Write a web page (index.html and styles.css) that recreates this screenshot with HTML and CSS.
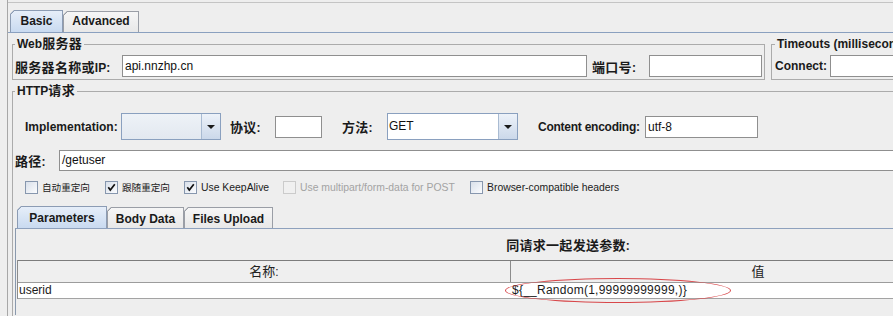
FILE: index.html
```html
<!DOCTYPE html>
<html lang="zh-CN">
<head>
<meta charset="utf-8">
<title>HTTP请求</title>
<link rel="stylesheet" href="styles.css">
</head>
<body>
<div class="wrap">
  <div class="topstrip"></div>
  <div class="tabs top-tabs">
    <div class="tab tab-sel tab-basic">Basic</div>
    <div class="tab tab-adv">Advanced</div>
  </div>
  <div class="tabpanel">
    <div class="server-row">
      <fieldset class="group group-web">
        <legend>Web<span class="zh">服务器</span></legend>
        <div class="row row-web">
          <span class="lbl lbl-ip"><span class="zh">服务器名称或</span>IP:</span>
          <div class="input in-ip">api.nnzhp.cn</div>
          <span class="lbl lbl-port"><span class="zh">端口号</span>:</span>
          <div class="input in-port"></div>
        </div>
      </fieldset>
      <fieldset class="group group-timeout">
        <legend>Timeouts (milliseconds)</legend>
        <div class="row row-timeout">
          <span class="lbl lbl-connect">Connect:</span>
          <div class="input in-connect"></div>
          <span class="lbl lbl-response">Response:</span>
          <div class="input in-response"></div>
        </div>
      </fieldset>
    </div>
    <fieldset class="group group-http">
      <legend>HTTP<span class="zh">请求</span></legend>
      <div class="row row-impl">
        <span class="lbl lbl-impl">Implementation:</span>
        <div class="combo combo-impl"><div class="combo-field"></div><div class="combo-btn"><span class="tri"></span></div></div>
        <span class="lbl lbl-proto"><span class="zh">协议</span>:</span>
        <div class="input in-proto"></div>
        <span class="lbl lbl-method"><span class="zh">方法</span>:</span>
        <div class="combo combo-method"><div class="combo-field">GET</div><div class="combo-btn"><span class="tri"></span></div></div>
        <span class="lbl lbl-enc">Content encoding:</span>
        <div class="input in-enc">utf-8</div>
      </div>
      <div class="row row-path">
        <span class="lbl lbl-path"><span class="zh">路径</span>:</span>
        <div class="input in-path">/getuser</div>
      </div>
      <div class="row row-checks">
        <div class="check check-1"><span class="cb"></span><span class="cb-text zh-s">自动重定向</span></div>
        <div class="check check-2"><span class="cb"><svg class="tick" width="11" height="11" viewBox="0 0 11 11"><path d="M2.3 5.2 L4.3 8 L8.8 2.3" fill="none" stroke="#111" stroke-width="1.7"/></svg></span><span class="cb-text zh-s">跟随重定向</span></div>
        <div class="check check-3"><span class="cb"><svg class="tick" width="11" height="11" viewBox="0 0 11 11"><path d="M2.3 5.2 L4.3 8 L8.8 2.3" fill="none" stroke="#111" stroke-width="1.7"/></svg></span><span class="cb-text">Use KeepAlive</span></div>
        <div class="check check-4 disabled"><span class="cb"></span><span class="cb-text">Use multipart/form-data for POST</span></div>
        <div class="check check-5"><span class="cb"></span><span class="cb-text">Browser-compatible headers</span></div>
      </div>
      <div class="params">
        <div class="tabs param-tabs">
          <div class="tab tab-sel tab-params">Parameters</div>
          <div class="tab tab-body">Body Data</div>
          <div class="tab tab-files">Files Upload</div>
        </div>
        <div class="param-panel">
          <div class="param-heading"><span class="zh">同请求一起发送参数</span>:</div>
          <div class="ptable">
            <div class="prow phead">
              <div class="pcell pname"><span class="zh-n">名称</span>:</div>
              <div class="pcell pvalue"><span class="zh-n">值</span></div>
            </div>
            <div class="prow pdata">
              <div class="pcell pname">userid</div>
              <div class="pcell pvalue"><span class="fn-text">${__Random(1,99999999999,)}</span><span class="annot"></span></div>
            </div>
          </div>
        </div>
      </div>
    </fieldset>
  </div>
</div>
</body>
</html>
```

FILE: styles.css
```css
html, body {
  margin: 0;
  padding: 0;
  background: #eeeeee;
  overflow: hidden;
}
body {
  width: 893px;
  height: 316px;
  font-family: "Liberation Sans", "Noto Sans CJK SC", sans-serif;
  font-size: 12px;
  color: #111;
}
.zh {
  font-size: 13px;
  letter-spacing: 0.3px;
}
.zh-n {
  font-size: 13px;
}
.wrap {
  margin-left: 7px;
  width: 1130px;
  height: 316px;
  border-left: 1px solid #a7a7a7;
}
.topstrip {
  height: 2px;
  border-bottom: 1px solid #c4c4c4;
}

/* tabs */
.tabs {
  display: flex;
  align-items: flex-end;
}
.top-tabs {
  margin-top: 7px;
  height: 22px;
  padding-left: 2px;
}
.tab {
  --bd: #9a9ea6;
  box-sizing: border-box;
  display: flex;
  align-items: center;
  justify-content: center;
  font-weight: bold;
  font-size: 12px;
  line-height: 14px;
  color: #1a1a1a;
  border: 1px solid var(--bd);
  border-bottom: none;
  clip-path: polygon(4px 0, 100% 0, 100% 100%, 0 100%, 0 4px);
  background:
    linear-gradient(to bottom right, transparent 2.6px, var(--bd) 2.6px, var(--bd) 3.9px, transparent 3.9px) 0 0 / 6px 6px no-repeat border-box,
    linear-gradient(#f6f6f6, #e8e8e8);
}
.tab-sel {
  --bd: #8c9cb4;
  background:
    linear-gradient(to bottom right, transparent 2.6px, var(--bd) 2.6px, var(--bd) 3.9px, transparent 3.9px) 0 0 / 6px 6px no-repeat border-box,
    linear-gradient(#e6eef9, #c9daf0);
}
.tab-basic { width: 53px; height: 22px; padding-bottom: 2px; }
.tab-adv { width: 76px; height: 21px; padding-bottom: 2px; }

.tabpanel {
  border-top: 1px solid #8aa0bf;
  padding-left: 4px;
}

/* titled groups */
.group {
  margin: 0;
  padding: 0;
  min-width: 0;
  border: 1px solid #ababab;
}
.group legend {
  margin-left: 2px;
  padding: 0 2px;
  font-weight: bold;
  line-height: 14px;
  color: #1a1a1a;
}
.server-row {
  display: flex;
  gap: 6px;
  margin-top: 4px;
}
.group-web {
  flex: none;
  width: 753px;
  box-sizing: border-box;
}
.group-timeout {
  flex: 1;
}
.group-timeout legend {
  margin-left: 3px;
}

.row {
  display: flex;
  align-items: center;
}
.lbl {
  flex: none;
  font-weight: bold;
  white-space: nowrap;
  color: #1a1a1a;
}
.input {
  flex: none;
  box-sizing: border-box;
  height: 22px;
  border: 1px solid #8f8f8f;
  background: #fff;
  padding: 0 2px;
  line-height: 20px;
  font-size: 12px;
  white-space: nowrap;
  overflow: hidden;
  color: #111;
}

.row-web {
  height: 22px;
  margin: 4px 0 2px;
  padding-left: 2px;
}
.lbl-ip { width: 107px; }
.in-ip { width: 465px; }
.lbl-port { width: 57px; margin-left: 5px; }
.in-port { width: 113px; }

.row-timeout {
  height: 22px;
  margin: 4px 0 2px;
  padding-left: 3px;
}
.lbl-connect { width: 55px; }
.in-connect { width: 110px; }
.lbl-response { width: 70px; margin-left: 10px; }
.in-response { width: 110px; }

.group-http {
  margin-top: 4px;
  border-bottom: none;
  border-right: none;
  height: 232px;
  box-sizing: border-box;
}

.row-impl {
  height: 27px;
  margin-top: 15px;
  padding-left: 12px;
}
.lbl-impl { width: 96px; }
.lbl-proto { width: 45px; margin-left: 9px; }
.in-proto { width: 47px; }
.lbl-method { width: 45px; margin-left: 20px; }
.lbl-enc { width: 107px; margin-left: 20px; letter-spacing: -0.25px; }
.in-enc { width: 113px; }

.combo {
  flex: none;
  display: flex;
  box-sizing: border-box;
  height: 27px;
  border: 1px solid #8aa0bf;
}
.combo-impl { width: 100px; }
.combo-method { width: 131px; }
.combo-field {
  flex: 1;
  line-height: 25px;
  padding-left: 1px;
  background: #fff;
}
.combo-impl .combo-field {
  background: linear-gradient(#eef2f7, #e2e8f0);
}
.combo-btn {
  width: 19px;
  box-sizing: border-box;
  border-left: 1px solid #a9bbd2;
  background: linear-gradient(#edf2f9, #cbd8ea);
  display: flex;
  align-items: center;
  justify-content: center;
}
.tri {
  width: 0;
  height: 0;
  border-left: 4px solid transparent;
  border-right: 4px solid transparent;
  border-top: 4px solid #1a1a1a;
}

.row-path {
  height: 21px;
  margin-top: 10px;
  padding-left: 2px;
}
.lbl-path { width: 44px; }
.in-path {
  flex: 1;
  height: 21px;
  line-height: 19px;
}

.row-checks {
  height: 13px;
  margin-top: 10px;
  padding-left: 12px;
}
.check {
  flex: none;
  display: flex;
  align-items: center;
  gap: 4px;
  height: 13px;
}
.check-1 { width: 80px; }
.check-2 { width: 79px; }
.check-3 { width: 99px; }
.check-4 { width: 187px; }
.cb {
  flex: none;
  width: 13px;
  height: 13px;
  box-sizing: border-box;
  border: 1px solid #8797ae;
  background: linear-gradient(135deg, #d9e0ea, #fbfcfe);
  display: flex;
  align-items: center;
  justify-content: center;
}
.cb-text {
  font-size: 10.4px;
  color: #222;
  white-space: nowrap;
  line-height: 13px;
}
.cb-text.zh-s {
  font-size: 9.6px;
}
.disabled .cb {
  border-color: #cbcbcb;
  background: #f0f0f0;
}
.disabled .cb-text {
  color: #a3a3a3;
}

.params {
  margin-top: 12px;
  margin-left: 2px;
}
.param-tabs {
  height: 22px;
  padding-left: 2px;
}
.tab-params { width: 90px; height: 22px; }
.tab-body { width: 77px; height: 21px; padding-top: 1px; }
.tab-files { width: 89px; height: 21px; padding-top: 1px; }

.param-panel {
  border-top: 1px solid #8ea1bd;
  border-left: 1px solid #8a99ad;
  height: 86px;
}
.param-heading {
  width: 1104px;
  padding-top: 9px;
  line-height: 16px;
  text-align: center;
  font-weight: bold;
  color: #1a1a1a;
}
.ptable {
  margin-top: 6px;
  margin-left: 1px;
  width: 988px;
  border-left: 1px solid #8c8c8c;
}
.prow {
  display: flex;
}
.phead {
  height: 21px;
  border-top: 1px solid #7c7c7c;
  border-bottom: 1px solid #9c9c9c;
  background: #efefef;
  line-height: 21px;
  text-align: center;
  color: #222;
}
.pcell {
  flex: none;
  box-sizing: border-box;
}
.pname { width: 493px; }
.pvalue { width: 494px; }
.phead .pname {
  border-right: 1px solid #8c8c8c;
}
.pdata {
  height: 15px;
  background: #fff;
  border-bottom: 1px solid #a3a3a3;
  line-height: 15px;
  color: #1a1a1a;
}
.pdata .pname { padding-left: 1px; }
.pdata .pvalue {
  position: relative;
  padding-left: 1px;
}
.fn-text {
  letter-spacing: 0.25px;
}
.annot {
  position: absolute;
  left: -6px;
  top: -5px;
  width: 226px;
  height: 25px;
  box-sizing: border-box;
  border: 1px solid #d8474a;
  border-radius: 50%;
}
```
